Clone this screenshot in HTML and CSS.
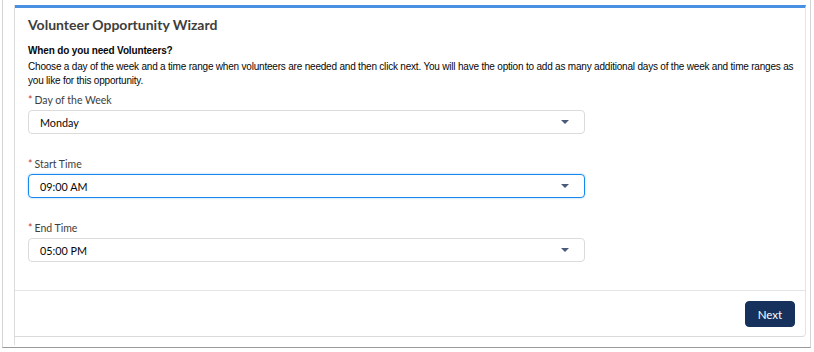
FILE: index.html
```html
<!DOCTYPE html>
<html>
<head>
<meta charset="utf-8">
<link rel="stylesheet" href="styles.css">
</head>
<body>
<div class="frame">
  <div class="panel">
    <div class="card">
      <div class="card-body">
        <h1 class="title">Volunteer Opportunity Wizard</h1>
        <p class="question">When do you need Volunteers?</p>
        <p class="desc">Choose a day of the week and a time range when volunteers are needed and then click next. You will have the option to add as many additional days of the week and time ranges as you like for this opportunity.</p>
        <div class="field">
          <div class="label"><span class="req">*</span>Day of the Week</div>
          <div class="select"><span>Monday</span><span class="caret"></span></div>
        </div>
        <div class="field">
          <div class="label"><span class="req">*</span>Start Time</div>
          <div class="select focus"><span>09:00 AM</span><span class="caret"></span></div>
        </div>
        <div class="field">
          <div class="label"><span class="req">*</span>End Time</div>
          <div class="select"><span>05:00 PM</span><span class="caret"></span></div>
        </div>
      </div>
      <div class="card-footer">
        <button class="btn">Next</button>
      </div>
    </div>
  </div>
</div>
</body>
</html>
```
FILE: styles.css
```css
html, body {
  margin: 0;
  padding: 0;
  background: #ffffff;
}
.frame {
  margin-left: 2px;
  width: 809px;
  height: 348px;
  box-sizing: border-box;
  border-left: 1px solid #d4d4d4;
  border-right: 1px solid #d4d4d4;
  border-bottom: 1px solid #9a9a9a;
  padding: 5px 4px 2px 11px;
}
.panel {
  height: 100%;
  border-left: 1px solid #dddbda;
  display: flex;
  flex-direction: column;
}
.card {
  border-top: 3px solid #4a90e2;
  border-right: 1px solid #e5e5e5;
  border-bottom: 1px solid #dddbda;
  border-bottom-right-radius: 4px;
  background: #fff;
}
.card-body {
  padding: 7px 8px 28px 13px;
}
.title {
  margin: 0;
  font-family: Lato, "Open Sans", sans-serif;
  font-weight: 700;
  font-size: 14px;
  line-height: 20px;
  color: #3e3e3c;
}
.question {
  margin: 9px 0 0;
  font-family: "Liberation Sans", Arial, sans-serif;
  font-weight: bold;
  font-size: 10px;
  letter-spacing: -0.15px;
  line-height: 14px;
  color: #080707;
}
.desc {
  margin: 2px 0 0;
  font-family: "Liberation Sans", Arial, sans-serif;
  font-size: 10px;
  letter-spacing: -0.2px;
  line-height: 14px;
  color: #080707;
}
.field {
  margin-top: 5px;
}
.field + .field {
  margin-top: 23px;
}
.label {
  font-family: Lato, "Open Sans", sans-serif;
  font-size: 10.5px;
  line-height: 14px;
  color: #3e3e3c;
  margin-bottom: 3px;
}
.req {
  color: #c23934;
  margin-right: 2px;
}
.select {
  width: 557px;
  height: 24px;
  box-sizing: border-box;
  border: 1px solid #dddbda;
  border-radius: 4px;
  display: flex;
  align-items: center;
  justify-content: space-between;
  padding: 0 15px 0 11px;
  font-family: Lato, "Open Sans", sans-serif;
  font-size: 10.8px;
  color: #080707;
}
.select.focus {
  border-color: #1589ee;
  box-shadow: 0 0 2px #8fc1f2;
}
.caret {
  width: 0;
  height: 0;
  border-left: 4px solid transparent;
  border-right: 4px solid transparent;
  border-top: 4px solid #4a5a78;
}
.card-footer {
  border-top: 1px solid #e5e5e5;
  padding: 10px 10px 9px;
  display: flex;
  justify-content: flex-end;
}
.btn {
  width: 50px;
  height: 26px;
  border: 1px solid #16325c;
  border-radius: 4px;
  background: #16325c;
  color: #fff;
  font-family: Lato, "Open Sans", sans-serif;
  font-size: 11.5px;
  padding: 0;
}
```
